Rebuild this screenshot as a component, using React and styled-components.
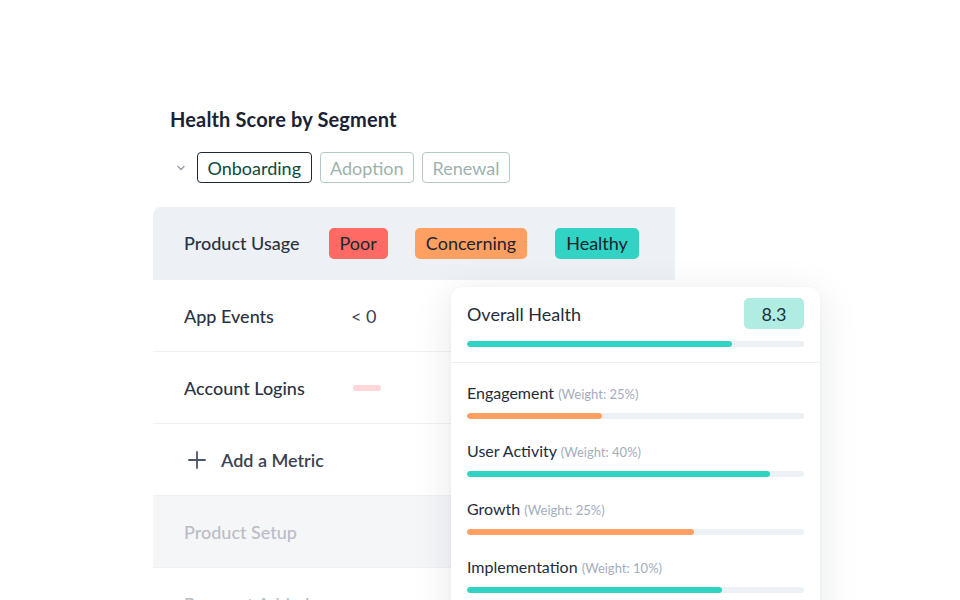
import React from "react";
import styled, { createGlobalStyle } from "styled-components";

const GlobalStyle = createGlobalStyle`
  html, body {
    margin: 0;
    padding: 0;
    background: #ffffff;
    font-family: Lato, "Noto Sans", sans-serif;
    overflow: hidden;
  }
  #root {
    height: 600px;
    overflow: hidden;
  }
`;

const segments = ["Onboarding", "Adoption", "Renewal"];

const rows = [
  { name: "App Events", value: "< 0" },
  { name: "Account Logins", pill: true },
];

const statuses = [
  { label: "Poor", color: "#ff6b64", gap: 29 },
  { label: "Concerning", color: "#ffa062", gap: 27 },
  { label: "Healthy", color: "#30d3c4", gap: 28 },
];

const factors = [
  { name: "Engagement", weight: 25, value: 40, color: "#ffa062" },
  { name: "User Activity", weight: 40, value: 90, color: "#30d3c4" },
  { name: "Growth", weight: 25, value: 67.5, color: "#ffa062" },
  { name: "Implementation", weight: 10, value: 75.6, color: "#30d3c4" },
];

const ChevronDown = () => (
  <svg width="12" height="12" viewBox="0 0 12 12" fill="none">
    <path d="M3 4.5 L6 7.5 L9 4.5" stroke="#94a0ad" strokeWidth="1.4" strokeLinecap="round" strokeLinejoin="round" />
  </svg>
);

const PlusIcon = () => (
  <svg width="20" height="20" viewBox="0 0 20 20" fill="none">
    <path d="M10 2 V18 M2 10 H18" stroke="#4a5568" strokeWidth="1.8" strokeLinecap="round" />
  </svg>
);

const App = () => (
  <>
    <GlobalStyle />
    <Page>
      <Title>Health Score by Segment</Title>
      <TabRow>
        <Chevron>
          <ChevronDown />
        </Chevron>
        {segments.map((s, i) => (
          <Tab key={s} active={i === 0}>
            {s}
          </Tab>
        ))}
      </TabRow>

      <TableArea>
        <Table>
          <HeaderRow>
            <RowLabel>Product Usage</RowLabel>
            {statuses.map((s) => (
              <Status key={s.label} color={s.color} gap={s.gap}>
                {s.label}
              </Status>
            ))}
          </HeaderRow>
          {rows.map((r) => (
            <Row key={r.name}>
              <RowLabel wide>{r.name}</RowLabel>
              {r.value && <Value>{r.value}</Value>}
              {r.pill && <MiniPill />}
            </Row>
          ))}
          <Row>
            <AddMetric>
              <PlusIcon />
              Add a Metric
            </AddMetric>
          </Row>
          <Row muted>
            <RowLabel muted>Product Setup</RowLabel>
          </Row>
          <Row>
            <RowLabel muted>Payment Added</RowLabel>
          </Row>
        </Table>

        <Card>
          <CardHead>
            <HeadLine>
              <OverallTitle>Overall Health</OverallTitle>
              <Score>8.3</Score>
            </HeadLine>
            <Track>
              <Fill color="#30d3c4" style={{ width: "78.6%" }} />
            </Track>
          </CardHead>
          <FactorList>
            {factors.map((f) => (
              <Factor key={f.name}>
                <FactorLabel>
                  {f.name} <Weight>(Weight: {f.weight}%)</Weight>
                </FactorLabel>
                <Track>
                  <Fill color={f.color} style={{ width: `${f.value}%` }} />
                </Track>
              </Factor>
            ))}
          </FactorList>
        </Card>
      </TableArea>
    </Page>
  </>
);

const Page = styled.div`
  padding: 106px 0 0 153px;
  width: 522px;
`;

const Title = styled.h1`
  margin: 0 0 0 17px;
  font-size: 20px;
  line-height: 26px;
  font-weight: 700;
  letter-spacing: 0.15px;
  color: #1a2233;
`;

const TabRow = styled.div`
  display: flex;
  align-items: center;
  gap: 8px;
  margin: 20px 0 0 22px;
`;

const Chevron = styled.span`
  display: flex;
  width: 12px;
  margin-right: 2px;
  margin-top: 1px;
`;

const Tab = styled.div`
  box-sizing: border-box;
  height: 31px;
  padding: 0 9.5px;
  display: flex;
  align-items: center;
  font-size: 18px;
  border-radius: 4px;
  border: 1px solid ${(p) => (p.active ? "#1f2a30" : "#b3c9c4")};
  color: ${(p) => (p.active ? "#0d4a3b" : "#9db2ad")};
`;

const TableArea = styled.div`
  position: relative;
  margin-top: 24px;
`;

const Table = styled.div`
  display: flex;
  flex-direction: column;
`;

const Row = styled.div`
  box-sizing: border-box;
  height: 72px;
  display: flex;
  align-items: center;
  padding-left: 31px;
  border-top: 1px solid #eef1f4;
  background: ${(p) => (p.muted ? "#f5f6f8" : "#ffffff")};
`;

const HeaderRow = styled(Row)`
  background: #edf1f5;
  border-top: none;
  border-top-left-radius: 8px;
`;

const RowLabel = styled.div`
  width: ${(p) => (p.wide ? "167px" : "auto")};
  white-space: nowrap;
  font-size: 18px;
  font-weight: 500;
  color: ${(p) => (p.muted ? "#b9bdc5" : "#2a3342")};
`;

const Value = styled.div`
  font-size: 18px;
  color: #3a4352;
`;

const MiniPill = styled.div`
  margin-left: 2px;
  width: 28px;
  height: 6px;
  border-radius: 3px;
  background: #ffd7da;
`;

const Status = styled.div`
  height: 31px;
  padding: 0 11px;
  margin-left: ${(p) => p.gap}px;
  display: flex;
  align-items: center;
  border-radius: 5px;
  font-size: 18px;
  color: #1c2430;
  background: ${(p) => p.color};
`;

const AddMetric = styled.div`
  display: flex;
  align-items: center;
  gap: 14px;
  margin-left: 3px;
  font-size: 18px;
  font-weight: 600;
  color: #3a4352;
`;

const Card = styled.div`
  position: absolute;
  top: 80px;
  left: 298px;
  width: 369px;
  height: 360px;
  background: #ffffff;
  border-radius: 12px 12px 0 0;
  box-shadow: 0 8px 40px rgba(20, 30, 50, 0.1), 0 1px 4px rgba(20, 30, 50, 0.04);
`;

const CardHead = styled.div`
  padding: 11px 16px 15px;
  border-bottom: 1px solid #eef1f4;
`;

const HeadLine = styled.div`
  display: flex;
  align-items: center;
  justify-content: space-between;
  margin-bottom: 12px;
`;

const OverallTitle = styled.div`
  font-size: 18px;
  color: #232c3b;
`;

const Score = styled.div`
  width: 60px;
  height: 31px;
  display: flex;
  align-items: center;
  justify-content: center;
  border-radius: 5px;
  background: #b0ece2;
  font-size: 18px;
  color: #17323a;
`;

const Track = styled.div`
  height: 6px;
  border-radius: 3px;
  background: #edf1f5;
  overflow: hidden;
`;

const Fill = styled.div`
  height: 100%;
  border-radius: 3px;
  background: ${(p) => p.color};
`;

const FactorList = styled.div`
  display: flex;
  flex-direction: column;
  gap: 22px;
  padding: 20px 16px 0;
`;

const Factor = styled.div`
  display: flex;
  flex-direction: column;
  gap: 9px;
`;

const FactorLabel = styled.div`
  font-size: 16px;
  line-height: 20px;
  color: #232c3b;
`;

const Weight = styled.span`
  font-size: 13px;
  color: #a3adbd;
`;

export default App;
